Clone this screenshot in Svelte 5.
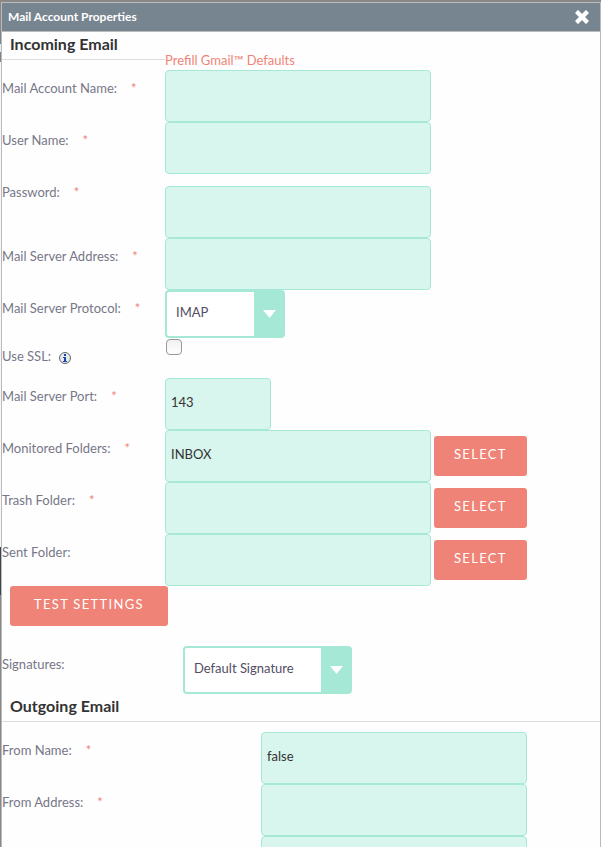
<script>
  let accountName = $state('');
  let userName = $state('');
  let password = $state('');
  let server = $state('');
  let protocol = $state('IMAP');
  let ssl = $state(false);
  let port = $state('143');
  let folders = $state([
    { id: 'monitored', label: 'Monitored Folders:', required: true, value: 'INBOX' },
    { id: 'trash', label: 'Trash Folder:', required: true, value: '' },
    { id: 'sent', label: 'Sent Folder:', required: false, value: '' }
  ]);
  let signature = $state('Default Signature');
  let fromName = $state('false');
  let fromAddress = $state('');
  let replyTo = $state('');
</script>

{#snippet caption(id, text, required = true)}
  <div class="caption">
    <label for={id}>{text}</label>
    {#if required}<span class="required">*</span>{/if}
  </div>
{/snippet}

{#snippet arrow()}
  <svg class="arrow" viewBox="0 0 13 8" aria-hidden="true"><path d="M0 0h13L6.500 8z" fill="#fff" /></svg>
{/snippet}

<div class="page">
  <main class="dialog">
    <header>
      <h1>Mail Account Properties</h1>
      <button class="close" type="button" aria-label="Close">
        <svg viewBox="0 0 14 14" aria-hidden="true">
          <path d="M3 3L11 11M11 3L3 11" stroke="#fff" stroke-width="4.400" stroke-linecap="square" />
        </svg>
      </button>
    </header>

    <form>
      <section class="incoming">
        <div class="top">
          <h2>Incoming Email</h2>
          <a href="#prefill">Prefill Gmail™ Defaults</a>
        </div>
        <div class="row">
          {@render caption('account', 'Mail Account Name:')}
          <input class="text" id="account" type="text" bind:value={accountName} />
        </div>
        <div class="row">
          {@render caption('user', 'User Name:')}
          <input class="text" id="user" type="text" bind:value={userName} />
        </div>
        <div class="row">
          {@render caption('password', 'Password:')}
          <input class="text spaced" id="password" type="password" bind:value={password} />
        </div>
        <div class="row">
          {@render caption('server', 'Mail Server Address:')}
          <input class="text" id="server" type="text" bind:value={server} />
        </div>
        <div class="row">
          {@render caption('protocol', 'Mail Server Protocol:')}
          <div class="select protocol">
            <select id="protocol" bind:value={protocol}><option>IMAP</option></select>
            {@render arrow()}
          </div>
        </div>
        <div class="row ssl">
          <div class="caption">
            <label for="ssl">Use SSL:</label>
            <svg class="info" viewBox="0 0 12 12" aria-hidden="true">
              <circle cx="6" cy="6" r="5.500" fill="#e6eaee" stroke="#666" />
              <path d="M5 2h2v2H5zM4 5h3v4h1v1H4V9h1V6H4z" fill="#1748a5" />
            </svg>
          </div>
          <input id="ssl" type="checkbox" bind:checked={ssl} />
        </div>
        <div class="row">
          {@render caption('port', 'Mail Server Port:')}
          <input class="text port" id="port" type="text" bind:value={port} />
        </div>
        {#each folders as folder (folder.id)}
          <div class="row">
            {@render caption(folder.id, folder.label, folder.required)}
            <div class="picker">
              <input class="text" id={folder.id} type="text" bind:value={folder.value} />
              <button class="action" type="button">SELECT</button>
            </div>
          </div>
        {/each}
        <button class="action test" type="button">TEST SETTINGS</button>
      </section>

      <section class="signatures">
        <div class="row">
          {@render caption('signature', 'Signatures:', false)}
          <div class="select signature">
            <select id="signature" bind:value={signature}><option>Default Signature</option></select>
            {@render arrow()}
          </div>
        </div>
      </section>

      <section class="outgoing">
        <h2>Outgoing Email</h2>
        <div class="row">
          {@render caption('fromname', 'From Name:')}
          <input class="text" id="fromname" type="text" bind:value={fromName} />
        </div>
        <div class="row">
          {@render caption('fromaddress', 'From Address:')}
          <input class="text" id="fromaddress" type="text" bind:value={fromAddress} />
        </div>
        <div class="row">
          <span></span>
          <input class="text" type="text" aria-label="Reply address" bind:value={replyTo} />
        </div>
      </section>
    </form>
  </main>
</div>

<style>
  :global(body) {
    margin: 0;
  }
  .page,
  .page * {
    box-sizing: border-box;
  }
  .page {
    height: 100vh;
    padding: 2px 0 0 1px;
    overflow: hidden;
    background: linear-gradient(
      #888 33px,
      #778591 33px 44px,
      #e4ecf4 44px 52px,
      #778591 52px 62px,
      #f6f6f6 62px 547px,
      #3c4650 547px 595px,
      #888 595px
    );
    color: #777788;
    font: 13px/20px Lato, sans-serif;
  }
  .dialog {
    min-height: 100vh;
    border: 1px solid #bbb;
    background: #fefefe;
  }
  header {
    display: flex;
    align-items: center;
    justify-content: space-between;
    height: 29px;
    padding: 0 11px 0 6px;
    border-bottom: 1px solid #bbb;
    background: #778591;
  }
  h1 {
    margin: 0;
    color: #fff;
    font-size: 12px;
    font-weight: 700;
  }
  .close {
    display: flex;
    padding: 0;
    border: 0;
    background: none;
  }
  .close svg {
    width: 14px;
    height: 14px;
  }
  h2 {
    margin: 0;
    padding: 2px 8px 5px;
    border-bottom: 1px solid #ddd;
    color: #333;
    font-size: 16px;
    font-weight: 700;
    line-height: 20px;
  }
  .row,
  .top {
    display: grid;
    grid-template-columns: 163px 1fr;
    align-items: start;
    justify-items: start;
  }
  .top {
    height: 38px;
    justify-items: stretch;
  }
  a {
    padding-top: 18px;
    color: #f08377;
    text-decoration: none;
  }
  .caption {
    display: flex;
    gap: 14px;
    padding-top: 8px;
  }
  .required {
    color: #f08377;
  }
  .text {
    width: 266px;
    height: 52px;
    margin: 0;
    padding: 0 5px 4px;
    border: 1px solid #a5e8d6;
    border-radius: 4px;
    background: #d8f5ee;
    color: #333;
    font: inherit;
  }
  .spaced {
    margin-top: 12px;
  }
  .port {
    width: 106px;
  }
  .select {
    display: grid;
    align-items: center;
    height: 48px;
    border: 2px solid #a5e8d6;
    border-radius: 4px;
    background: linear-gradient(#a5e8d6, #a5e8d6) right / 29px 100% no-repeat #fff;
  }
  .select > :global(*) {
    grid-area: 1 / 1;
  }
  .protocol {
    width: 120px;
  }
  .signature {
    width: 169px;
  }
  select {
    width: 100%;
    height: 44px;
    padding: 0 36px 4px 9px;
    border: 0;
    background: none;
    color: #534d64;
    font: inherit;
    appearance: none;
  }
  .arrow {
    justify-self: end;
    width: 13px;
    height: 8px;
    margin-right: 7px;
    pointer-events: none;
  }
  .ssl {
    height: 40px;
  }
  .ssl .caption {
    gap: 8px;
    align-items: center;
  }
  .info {
    width: 12px;
    height: 12px;
    margin-top: 3px;
  }
  input[type='checkbox'] {
    width: 16px;
    height: 16px;
    margin: 1px;
    border: 1px solid #999;
    border-radius: 4px;
    background: linear-gradient(#f0f0f0, #fff);
    appearance: none;
  }
  .picker {
    display: flex;
    align-items: center;
    gap: 3px;
  }
  .action {
    height: 40px;
    padding: 0 20px 4px;
    border: 0;
    border-radius: 3px;
    background: #f08377;
    color: #fff;
    font: 13px/20px Lato, sans-serif;
    letter-spacing: 0.1em;
  }
  .test {
    display: block;
    margin-left: 8px;
    padding: 0 24px 4px;
  }
  .signatures {
    padding-top: 20px;
  }
  .signatures .row {
    grid-template-columns: 181px 1fr;
  }
  .outgoing h2 {
    margin-bottom: 10px;
  }
  .outgoing .row {
    grid-template-columns: 259px 1fr;
  }
</style>
